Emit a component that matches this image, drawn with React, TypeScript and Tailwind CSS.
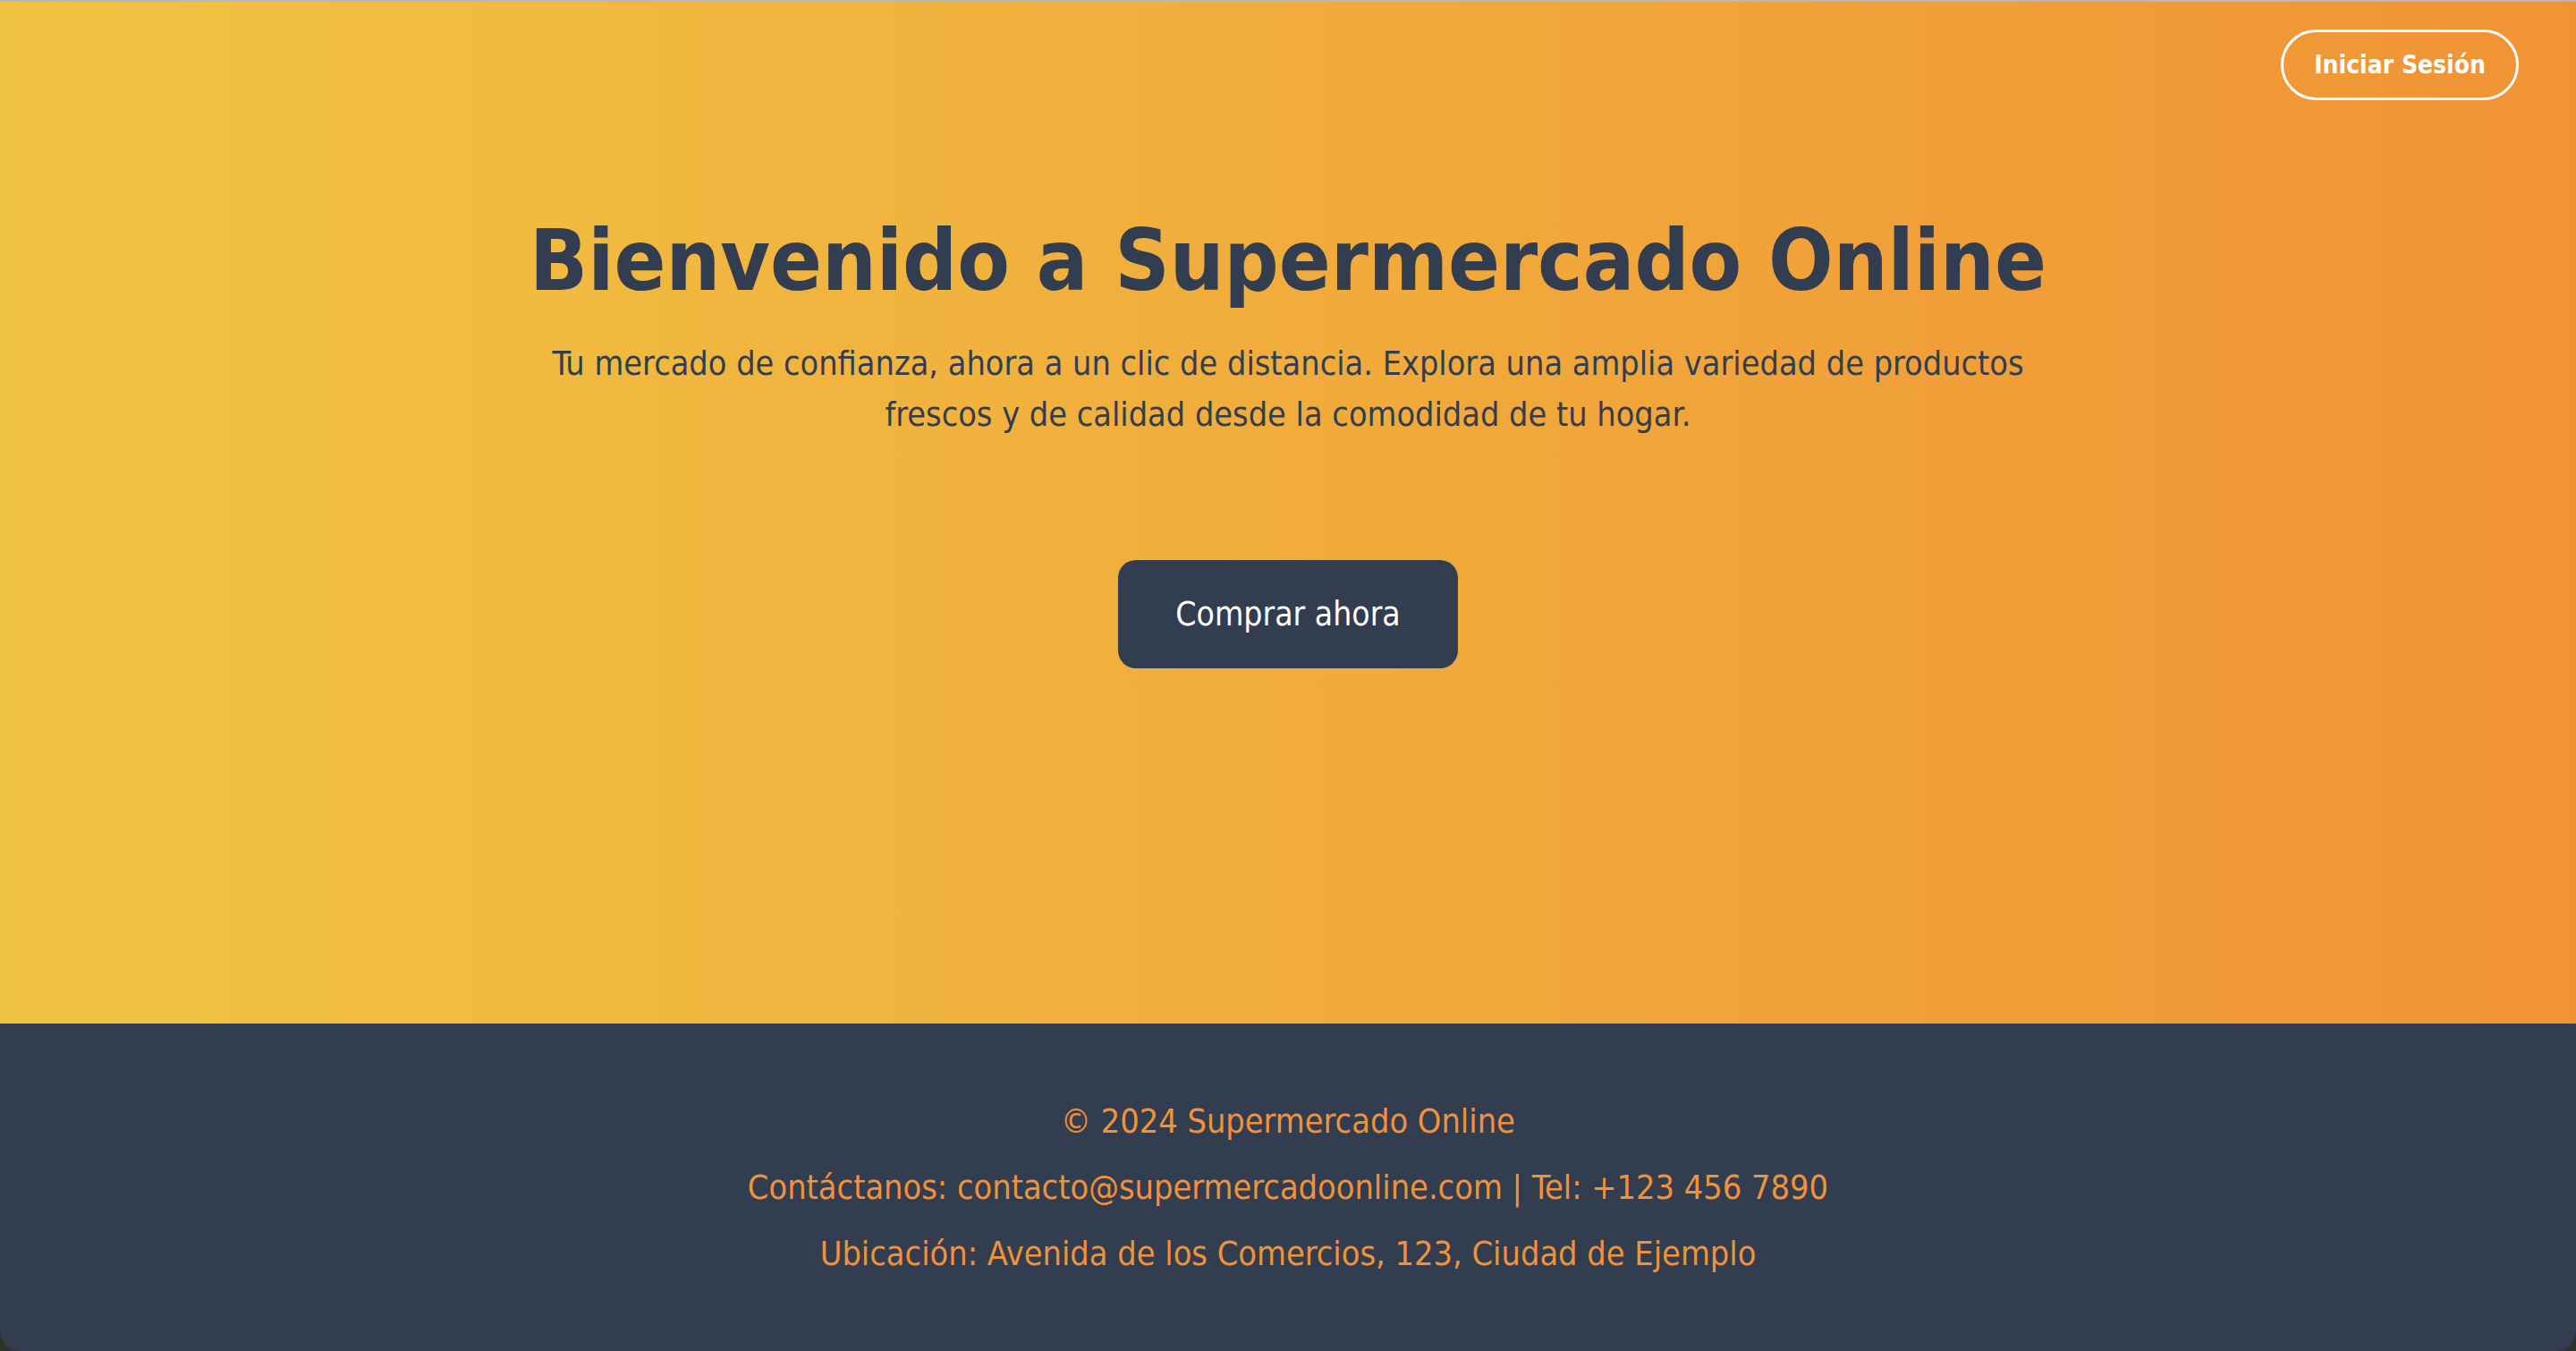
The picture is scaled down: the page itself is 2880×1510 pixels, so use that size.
import React from "react";

export default function App() {
  const font = { fontFamily: "'DejaVu Sans Condensed', 'DejaVu Sans', Verdana, sans-serif" };
  return (
    <div className="w-full h-[1510px] bg-[#2d322d] flex flex-col" style={font}>
      <div className="h-[2px] w-full bg-[#b3b8c3]" />
      <div className="flex-1 flex flex-col rounded-b-[22px] overflow-hidden">
        <section className="relative flex-1 bg-gradient-to-r from-[#f0c443] to-[#f09335] flex flex-col items-center pt-[242px]">
          <button className="absolute top-[31px] right-[64px] h-[79px] px-[34px] rounded-full border-[3px] border-white text-white text-[28px] font-bold">
            Iniciar Sesión
          </button>
          <h1 className="text-[95px] leading-none font-bold text-[#323d4f] mb-[39px]">
            Bienvenido a Supermercado Online
          </h1>
          <p className="text-[37.5px] leading-[57px] text-[#323d4f] text-center">
            Tu mercado de confianza, ahora a un clic de distancia. Explora una amplia variedad de productos
            <br />
            frescos y de calidad desde la comodidad de tu hogar.
          </p>
          <button className="mt-[134px] h-[121px] px-[64px] rounded-[20px] bg-[#323d4f] text-white text-[37px] leading-[56px]">
            Comprar ahora
          </button>
        </section>
        <footer className="h-[366px] bg-[#323d4f] flex flex-col items-center justify-center gap-[18px] text-[#f0923a] text-[37.6px] leading-[56px]">
          <p>© 2024 Supermercado Online</p>
          <p>Contáctanos: contacto@supermercadoonline.com | Tel: +123 456 7890</p>
          <p>Ubicación: Avenida de los Comercios, 123, Ciudad de Ejemplo</p>
        </footer>
      </div>
    </div>
  );
}
